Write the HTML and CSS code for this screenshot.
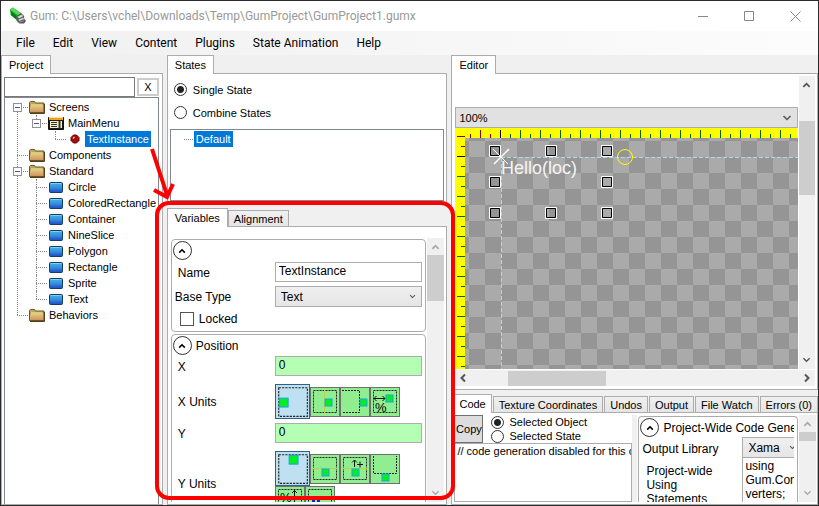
FILE: index.html
```html
<!DOCTYPE html>
<html lang="en">
<head>
<meta charset="utf-8">
<title>Gum</title>
<link rel="stylesheet" href="styles.css">
</head>
<body>
<svg class="defs" aria-hidden="true">
  <defs>
    <linearGradient id="blue" x1="0" y1="0" x2="0" y2="1"><stop offset="0" stop-color="#4fb0ea"/><stop offset=".5" stop-color="#2f93dc"/><stop offset="1" stop-color="#2346c4"/></linearGradient>
    <linearGradient id="fold" x1="0" y1="0" x2="0" y2="1"><stop offset="0" stop-color="#e6cf82"/><stop offset="1" stop-color="#cf9560"/></linearGradient>
    <symbol id="folder" viewBox="0 0 16 16"><path d="M.5 13.500V3.500l1-1h4l1 1.500h8.500v9.500z" fill="#c9a45c" stroke="#6b5424"/><path d="M2 5h11v4H2z" fill="#d3d27c"/><path d="M1 13V8h6l1-2h6v7z" fill="url(#fold)"/><path d="M1 14.500h14.500V5" fill="none" stroke="#54401c"/></symbol>
    <symbol id="screen" viewBox="0 0 16 16"><path d="M.5 2.500h15v12H.5z" fill="#1c1c1c" stroke="#111"/><path d="M1 2h14v3H1z" fill="#f2a21c"/><path d="M1 2.500h14" stroke="#ffe08a"/><path d="M2 6h12v7H2z" fill="#f4efc8"/><path d="M3 7.500h6M3 9.500h6M3 11.500h6" stroke="#333"/><path d="M11.500 6v7" stroke="#333" stroke-width="2"/></symbol>
    <symbol id="gem" viewBox="0 0 16 16"><path d="M6.500 4h3L12 6.500v3L9.500 12h-3L4 9.500v-3z" fill="#b00808" stroke="#5c0000"/><path d="M6 7.500L7.500 6" stroke="#ffb0b0" stroke-width="1.500"/></symbol>
    <symbol id="block" viewBox="0 0 16 16"><rect x="1.500" y="3.500" width="13" height="10" rx="1" fill="url(#blue)" stroke="#123a66"/><path d="M3 4.500h10" stroke="#7fd0f4"/></symbol>
    <symbol id="up" viewBox="0 0 10 6"><path d="M1.500 5L5 1.500 8.500 5" fill="none" stroke="currentColor" stroke-width="2"/></symbol>
    <symbol id="down" viewBox="0 0 10 6"><path d="M1.500 1L5 4.500 8.500 1" fill="none" stroke="currentColor" stroke-width="1.500"/></symbol>
  </defs>
</svg>
<div class="window">
  <header class="titlebar">
    <svg class="logo" viewBox="0 0 18 18"><path d="M1 2l3-2 9 6-1 6-4 1-6-5z" fill="#0fae22"/><path d="M1 2l3-2 9 6-4 2z" fill="#54d95c"/><path d="M2 4l6 5v4L2 8z" fill="#087b17"/><path d="M8 9l5-3 3 3v3l2 2-2 3h-5l-3-3z" fill="#555"/><path d="M9 10l4-2 2 1-4 2zM10 13l5-2 1 1-5 2zM11 15.500l5-1.500" fill="#ddd" stroke="#ddd" stroke-width=".5"/></svg>
    <h1 class="caption">Gum: C:\Users\vchel\Downloads\Temp\GumProject\GumProject1.gumx</h1>
    <div class="winbtns">
      <button aria-label="Minimize"><svg viewBox="0 0 11 11"><path d="M0 5.500h10"/></svg></button>
      <button aria-label="Maximize"><svg viewBox="0 0 11 11"><path d="M.5.500h9v9h-9z"/></svg></button>
      <button aria-label="Close"><svg viewBox="0 0 11 11"><path d="M.5.500l10 10M10.500.500l-10 10"/></svg></button>
    </div>
  </header>
  <nav class="menu">
    <button>File</button><button>Edit</button><button>View</button><button>Content</button><button>Plugins</button><button>State Animation</button><button>Help</button>
  </nav>
  <main class="work">
    <section class="pane project">
      <div class="tabs"><button class="tab on">Project</button></div>
      <div class="body">
        <div class="search"><input type="text" aria-label="Search"><button>X</button></div>
        <ul class="tree">
          <li><span class="row root"><i class="box"></i><svg><use href="#folder"/></svg><b>Screens</b></span>
            <ul class="l2">
              <li><span class="row"><i class="box"></i><svg><use href="#screen"/></svg><b>MainMenu</b></span>
                <ul class="l3"><li><span class="row"><svg><use href="#gem"/></svg><b class="sel">TextInstance</b></span></li></ul>
              </li>
            </ul>
          </li>
          <li><span class="row root"><svg><use href="#folder"/></svg><b>Components</b></span></li>
          <li><span class="row root"><i class="box"></i><svg><use href="#folder"/></svg><b>Standard</b></span>
            <ul class="l2">
              <li><span class="row"><svg><use href="#block"/></svg><b>Circle</b></span></li>
              <li><span class="row"><svg><use href="#block"/></svg><b>ColoredRectangle</b></span></li>
              <li><span class="row"><svg><use href="#block"/></svg><b>Container</b></span></li>
              <li><span class="row"><svg><use href="#block"/></svg><b>NineSlice</b></span></li>
              <li><span class="row"><svg><use href="#block"/></svg><b>Polygon</b></span></li>
              <li><span class="row"><svg><use href="#block"/></svg><b>Rectangle</b></span></li>
              <li><span class="row"><svg><use href="#block"/></svg><b>Sprite</b></span></li>
              <li><span class="row"><svg><use href="#block"/></svg><b>Text</b></span></li>
            </ul>
          </li>
          <li><span class="row root"><svg><use href="#folder"/></svg><b>Behaviors</b></span></li>
        </ul>
      </div>
    </section>

    <div class="middle">
      <section class="pane states">
        <div class="tabs"><button class="tab on">States</button></div>
        <div class="body">
          <label class="radio"><input type="radio" name="mode" checked>Single State</label>
          <label class="radio"><input type="radio" name="mode">Combine States</label>
          <div class="statelist"><span class="dots"></span><b class="sel">Default</b></div>
        </div>
      </section>
      <section class="pane vars">
        <div class="tabs"><button class="tab on">Variables</button><button class="tab">Alignment</button></div>
        <div class="body split">
          <div class="groups">
            <div class="group">
              <div class="ghead"><button class="expand" aria-label="Collapse"><svg><use href="#up"/></svg></button></div>
              <div class="field name"><label for="nm">Name</label><input id="nm" type="text" value="TextInstance"></div>
              <div class="field base"><label for="bt">Base Type</label><span class="combo"><select id="bt"><option>Text</option></select><svg><use href="#down"/></svg></span></div>
              <label class="check"><input type="checkbox">Locked</label>
            </div>
            <div class="group">
              <div class="ghead"><button class="expand" aria-label="Collapse"><svg><use href="#up"/></svg></button>Position</div>
              <div class="field green"><label for="px">X</label><input id="px" type="text" value="0"></div>
              <div class="field units"><span>X Units</span>
                <div class="unitset">
                  <button class="u on" aria-label="Left"><svg viewBox="0 0 30 30"><rect class="d" x="2.500" y="2.500" width="26" height="26"/><rect class="g" x="3" y="12" width="8" height="8"/></svg></button>
                  <button class="u" aria-label="Center"><svg viewBox="0 0 28 28"><rect class="d" x="2.500" y="2.500" width="23" height="22"/><path class="y" d="M13.500 2v23"/><rect class="g" x="14" y="11" width="7" height="7"/></svg></button>
                  <button class="u" aria-label="Right"><svg viewBox="0 0 28 28"><path class="d" d="M1 2.500h17.500v22H1"/><rect class="g" x="19" y="11" width="7" height="7"/></svg></button>
                  <button class="u" aria-label="Percent"><svg viewBox="0 0 28 28"><rect class="d" x="2.500" y="2.500" width="23" height="22"/><path class="k" d="M3 10.500h11M5.500 8L3 10.500 5.500 13M11.500 8l2.500 2.500L11.500 13"/><text x="4" y="24">%</text><rect class="g" x="15" y="7" width="7" height="7"/></svg></button>
                </div>
              </div>
              <div class="field green"><label for="py">Y</label><input id="py" type="text" value="0"></div>
              <div class="field units tall"><span>Y Units</span>
                <div class="unitset">
                  <button class="u on" aria-label="Top"><svg viewBox="0 0 30 30"><rect class="d" x="2.500" y="2.500" width="26" height="26"/><rect class="g" x="12" y="3" width="8" height="8"/></svg></button>
                  <button class="u" aria-label="Middle"><svg viewBox="0 0 28 28"><rect class="d" x="2.500" y="2.500" width="23" height="22"/><path class="y" d="M2 13.500h24"/><rect class="g" x="11" y="14" width="7" height="7"/></svg></button>
                  <button class="u" aria-label="Middle inverted"><svg viewBox="0 0 28 28"><rect class="d" x="2.500" y="2.500" width="23" height="22"/><path class="y" d="M2 13.500h24"/><path class="k" d="M13.500 12V5M11 7.500L13.500 5 16 7.500M16 9.500h6M19 6.500v6"/><rect class="g" x="11" y="14" width="7" height="7"/></svg></button>
                  <button class="u" aria-label="Bottom"><svg viewBox="0 0 28 28"><path class="d" d="M2.500 1v17.500h23V1"/><rect class="g" x="11" y="19" width="7" height="7"/></svg></button>
                  <button class="u" aria-label="Percent height"><svg viewBox="0 0 28 28"><rect class="d" x="2.500" y="2.500" width="23" height="22"/><text x="4" y="15">%</text><path class="k" d="M18.500 3v14M16 6l2.500-2.500L21 6"/></svg></button>
                  <button class="u" aria-label="Baseline"><svg viewBox="0 0 28 28"><rect class="d" x="2.500" y="2.500" width="23" height="22"/><path d="M6 12h3v8H6zM11 12h3v8h-3z" fill="#1420e0"/></svg></button>
                </div>
              </div>
            </div>
          </div>
          <div class="vbar dim"><svg><use href="#up"/></svg><i class="thumb"></i><svg class="end"><use href="#down"/></svg></div>
        </div>
      </section>
    </div>

    <div class="right">
      <section class="pane editor">
        <div class="tabs"><button class="tab on">Editor</button></div>
        <div class="body">
          <div class="split viewarea">
            <div class="view">
              <span class="combo zoom"><select aria-label="Zoom"><option>100%</option></select><svg><use href="#down"/></svg></span>
              <svg class="canvas" role="img" aria-label="Canvas">
                <defs>
                  <pattern id="chk" x="14" y="13" width="32" height="32" patternUnits="userSpaceOnUse"><path d="M0 0h32v32H0z" fill="#aaa"/><path d="M16 0h16v16H16zM0 16h16v16H0z" fill="#959595"/></pattern>
                  <pattern id="th" x="5" y="0" width="20" height="11" patternUnits="userSpaceOnUse"><path d="M0 2h1v8H0zM10 6h1v4h-1z" fill="#006400"/></pattern>
                  <pattern id="tv" x="0" y="8" width="11" height="20" patternUnits="userSpaceOnUse"><path d="M2 0h8v1H2zM6 10h4v1H6z" fill="#006400"/></pattern>
                </defs>
                <rect width="100%" height="100%" fill="#ff0"/>
                <rect x="11" width="100%" height="10" fill="url(#th)"/>
                <rect y="11" width="10" height="100%" fill="url(#tv)"/>
                <rect x="10" y="10" width="100%" height="100%" fill="url(#chk)"/>
                <path d="M15 6h1v4h-1zM25 2h1v8h-1zM35 6h1v4h-1zM2 8h8v1H2zM6 18h4v1H6z" fill="#8b0000"/>
                <path d="M45 2h1v8h-1zM2 28h8v1H2z" fill="#000"/>
                <path d="M46.500 30V400M46 29.500H900" stroke="#add8e6" stroke-dasharray="4 2" fill="none"/>
                <g fill="none" stroke="#fff"><path d="M34.500 17.500h11v11h-11zM90.500 17.500h11v11h-11zM146.500 17.500h11v11h-11zM34.500 48.500h11v11h-11zM146.500 48.500h11v11h-11zM34.500 79.500h11v11h-11zM90.500 79.500h11v11h-11zM146.500 79.500h11v11h-11z"/>
                <path stroke="#000" d="M35.500 18.500h9v9h-9zM91.500 18.500h9v9h-9zM147.500 18.500h9v9h-9zM35.500 49.500h9v9h-9zM147.500 49.500h9v9h-9zM35.500 80.500h9v9h-9zM91.500 80.500h9v9h-9zM147.500 80.500h9v9h-9z"/>
                <path d="M38 21l15 15"/><path d="M39 36l15-15" stroke-width="1.500"/></g>
                <circle cx="170" cy="29" r="7.500" fill="none" stroke="#ff0"/>
                <text class="hello" x="46" y="46">Hello(loc)</text>
              </svg>
            </div>
            <div class="vbar ed"><svg><use href="#up"/></svg><i class="thumb"></i><svg class="end"><use href="#down"/></svg></div>
          </div>
          <div class="hbar"><svg class="lt"><use href="#up"/></svg><i class="thumb"></i><svg class="rt"><use href="#up"/></svg></div>
        </div>
      </section>
      <section class="pane code">
        <div class="tabs"><button class="tab on">Code</button><button class="tab">Texture Coordinates</button><button class="tab">Undos</button><button class="tab">Output</button><button class="tab">File Watch</button><button class="tab">Errors (0)</button></div>
        <div class="body split">
          <div class="codeleft">
            <div class="copyrow"><button class="copy">Copy</button>
              <div><label class="radio sm"><input type="radio" name="gen" checked>Selected Object</label><label class="radio sm"><input type="radio" name="gen">Selected State</label></div>
            </div>
            <textarea aria-label="Generated code" wrap="off">// code generation disabled for this object</textarea>
          </div>
          <div class="gutter"></div>
          <div class="group settings">
            <div class="ghead"><button class="expand" aria-label="Collapse"><svg><use href="#up"/></svg></button>Project-Wide Code Generation</div>
            <div class="srow"><label for="ol">Output Library</label><span class="combo"><select id="ol"><option>Xama</option></select><svg><use href="#down"/></svg></span></div>
            <div class="srow"><label class="in" for="us">Project-wide Using Statements</label><textarea id="us" wrap="off">using
Gum.Con
verters;</textarea></div>
          </div>
          <div class="vbar dim cs"><svg><use href="#up"/></svg><i class="thumb"></i><svg class="end"><use href="#down"/></svg></div>
        </div>
      </section>
    </div>
  </main>
  <svg class="mark" viewBox="0 0 819 506" aria-hidden="true"><g fill="none" stroke="#f00" stroke-width="4"><rect x="157" y="203" width="296" height="295" rx="12"/><path d="M152 149l15 46M154 190l13 7 6-13"/></g></svg>
</div>
</body>
</html>
```
FILE: styles.css
```css
* { box-sizing: border-box; }
html, body { height: 100%; }
body { margin: 0; font: 11px/16px "Liberation Sans", Arial, sans-serif; color: #000; }
button, input, select, textarea { font: inherit; color: inherit; margin: 0; padding: 0; border: 0; border-radius: 0; background: none; }
ul { list-style: none; margin: 0; padding: 0; }
b { font-weight: normal; }
.defs { position: absolute; width: 0; height: 0; }
.window { position: relative; height: 100vh; overflow: hidden; display: flex; flex-direction: column; border: 1px solid #2b2b2b; background: #f0f0f0; }
.titlebar { display: flex; align-items: center; height: 30px; padding-left: 8px; background: #fff; flex: none; }
.logo { width: 17px; height: 18px; }
.caption { flex: 1; margin: 0 0 0 4px; font: 12px/16px Roboto, sans-serif; color: #999; white-space: nowrap; }
.winbtns { display: flex; }
.winbtns button { width: 46px; height: 30px; display: grid; place-items: center; }
.winbtns svg { width: 11px; height: 11px; fill: none; stroke: #888; }
.menu { display: flex; flex: none; height: 24px; padding-left: 6px; background: linear-gradient(90deg, #f0f0f0, #fcfcfc); font: 12px/16px Roboto, sans-serif; }
.menu button { padding: 0 9px; white-space: nowrap; }
.work { flex: 1; min-height: 0; display: grid; grid-template-columns: 162fr 281fr 367fr; gap: 4px; }
.middle, .right { display: flex; flex-direction: column; min-width: 0; min-height: 0; }
.pane { display: flex; flex-direction: column; min-width: 0; min-height: 0; }
.tabs { display: flex; align-items: flex-end; flex: none; height: 19px; margin-bottom: -1px; }
.tab { height: 16px; margin-bottom: 1px; padding: 0 5px; border: 1px solid #acacac; border-bottom: 0; background: linear-gradient(#f0f0f0, #e5e5e5); white-space: nowrap; line-height: 14px; }
.tab.on { position: relative; height: 19px; margin-bottom: 0; padding: 0 7px; background: #fff; }
.body { flex: 1; min-height: 0; min-width: 0; border: 1px solid #acacac; background: #fff; }
.split { display: flex; }
.sel { background: #0078d7; color: #fff; }

.project .body { display: flex; flex-direction: column; padding: 3px 3px 0 2px; }
.search { display: flex; gap: 2px; flex: none; }
.search input { flex: 1; min-width: 0; height: 20px; border: 1px solid #7a7a7a; }
.search button { width: 22px; height: 18px; margin-top: 1px; border: 2px solid #ccc; line-height: 14px; }
.tree { flex: 1; padding: 1px 0 0 12px; border: 1px solid #828790; border-bottom: 0; overflow: hidden; }
.tree li { position: relative; }
.row { display: flex; align-items: center; height: 16px; gap: 1px; position: relative; }
.row svg { width: 16px; height: 16px; flex: none; }
.row b { margin-left: 1px; padding: 0 2px; line-height: 16px; }
.row::before { content: ""; flex: none; width: 11px; border-top: 1px dotted #888; }
.tree > li:not(:last-child)::before, .l2 > li:not(:last-child)::before { content: ""; position: absolute; left: 0; top: 8px; bottom: -8px; border-left: 1px dotted #888; }
.l2, .l3 { padding-left: 19px; }
.l2 > li::after, .l3 > li::after { content: ""; position: absolute; left: 0; top: 0; height: 8px; border-left: 1px dotted #888; }
.box { position: absolute; z-index: 1; left: -4px; top: 4px; width: 9px; height: 9px; border: 1px solid #919191; background: linear-gradient(#3b5aa8, #3b5aa8) center / 5px 1px no-repeat #fff; }

.states { flex: none; height: 150px; }
.states .body { display: flex; flex-direction: column; padding: 4px 2px 3px 2px; }
.radio { display: flex; align-items: center; gap: 6px; height: 23px; padding-left: 4px; white-space: nowrap; }
input[type=radio] { appearance: none; width: 13px; height: 13px; flex: none; border: 1px solid #333; border-radius: 50%; background: #fff; }
input[type=radio]:checked { background: radial-gradient(circle, #222 3px, #fff 4px); }
.statelist { flex: 1; display: flex; align-items: flex-start; margin-top: 5px; padding: 1px 0 0 13px; border: 1px solid #828790; }
.dots { width: 9px; margin: 8px 1px 0 0; border-top: 1px dotted #888; }
.statelist .sel { padding: 0 2px; }

.vars { flex: 1; margin-top: 3px; }
.vars .body { padding: 11px 2px 2px 3px; }
.groups { flex: 1; min-width: 0; overflow: hidden; font-size: 12px; }
.group { border: 1px solid #acacac; border-radius: 4px; padding: 1px 3px 2px 1px; margin-bottom: 2px; }
.groups .group { margin-top: 1px; }
.groups .group + .group { margin-top: 0; }
.ghead { display: flex; align-items: center; gap: 4px; height: 19px; white-space: nowrap; overflow: hidden; }
.groups .group + .group .ghead { margin-bottom: 1px; }
.expand { display: grid; place-items: center; flex: none; width: 19px; height: 19px; border: 1px solid #333; border-radius: 50%; }
.expand svg { width: 8px; height: 6px; }
.field { display: grid; grid-template-columns: 102px 1fr; align-items: center; min-height: 19px; }
.field > label, .field > span:first-child { padding-left: 5px; }
.field > input { width: 100%; height: 20px; padding: 0 3px 2px; border: 1px solid #abadb3; }
.green > input { background: #b4ffb4; }
.name { margin-top: 2px; }
.name > label, .green > label { padding-top: 2px; }
.base { margin: 4px 0 2px; }
.base > label { padding-left: 2px; }
.combo { position: relative; display: block; }
.combo select { appearance: none; width: 100%; height: 21px; padding: 0 5px; border: 1px solid #acacac; background: linear-gradient(#f0f0f0, #e5e5e5); }
.combo svg { position: absolute; right: 6px; top: 8px; width: 7px; height: 5px; color: #555; pointer-events: none; }
.check { display: flex; align-items: center; gap: 5px; height: 20px; padding-left: 7px; }
.check input { appearance: none; width: 14px; height: 14px; border: 1px solid #555; background: #fff; }
.units { margin: 8px 0 4px; }
.unitset { display: flex; flex-wrap: wrap; align-items: center; }
.u { width: 30px; height: 30px; border: 1px solid #707070; background: #90ee90; }
.u.on { width: 35px; height: 35px; border-color: #2c628b; background: #bee0f0; }
.u svg { display: block; width: 100%; height: 100%; font-size: 13px; }
.u .d { fill: none; stroke: #222; stroke-dasharray: 2 1; }
.u .g { fill: #00f020; stroke: #1ca0e8; }
.u .y { stroke: #c8d040; }
.u .k { stroke: #111; fill: none; }
.vbar { display: flex; flex-direction: column; align-items: center; flex: none; width: 17px; margin-left: 1px; padding: 6px 0; background: #f0f0f0; color: #555; }
.vbar svg { width: 9px; height: 6px; flex: none; }
.vbar.dim { color: #aaa; }
.vbar .thumb { width: 100%; height: 46px; margin-top: 5px; background: #cdcdcd; }
.vbar .end { margin-top: auto; }

.editor { flex: none; height: 335px; }
.editor .body { display: flex; flex-direction: column; padding: 2px 2px 3px 3px; }
.viewarea { flex: 1; min-height: 0; }
.view { flex: 1; min-width: 0; display: flex; flex-direction: column; padding-top: 31px; }
.zoom select { display: block; padding: 0 3px; background: #e1e1e1; }
.zoom svg { width: 10px; height: 6px; }
.canvas { flex: 1; width: 100%; min-height: 0; }
.hello { font: 18px "Liberation Sans", sans-serif; fill: #f4f4f4; }
.vbar.ed { width: 16px; }
.ed .thumb { height: 74px; margin-top: 33px; }
.hbar { display: flex; align-items: center; flex: none; height: 16px; margin-top: 1px; padding: 0 3px; background: #f0f0f0; color: #555; }
.hbar svg { width: 10px; height: 6px; }
.lt { transform: rotate(-90deg); }
.rt { transform: rotate(90deg); margin-left: auto; }
.hbar .thumb { width: 98px; height: 15px; margin-left: 40px; background: #cdcdcd; }

.code { flex: 1; margin-top: 4px; }
.code .tabs { gap: 1px; padding-left: 2px; }
.code .tab.on { padding: 0 5px; }
.code .body { padding: 2px 1px 2px 2px; }
.codeleft { flex: 0 0 178px; min-width: 0; display: flex; flex-direction: column; }
.copyrow { display: flex; gap: 4px; height: 28px; }
.copy { width: 29px; border: 1px solid #707070; background: #ddd; }
.radio.sm { gap: 5px; height: 14px; }
.codeleft textarea { flex: 1; width: 100%; min-height: 0; padding: 0 2px; border: 1px solid #abadb3; line-height: 14px; resize: none; overflow: hidden; background: #fff; }
.gutter { flex: none; width: 5px; background: #f0f0f0; }
.settings { flex: 1; min-width: 0; margin: 1px 0 0 1px; border-bottom: 0; border-radius: 4px 4px 0 0; overflow: hidden; font-size: 12px; }
.srow { display: grid; grid-template-columns: 102px 60px; align-items: start; overflow: hidden; line-height: 14px; }
.srow label { padding: 5px 0 0 2px; }
.srow .in { padding: 6px 20px 0 6px; }
.srow textarea { width: 100%; height: 50px; padding: 1px 2px; border: 1px solid #abadb3; border-top: 0; resize: none; overflow: hidden; line-height: 14px; }
.cs .thumb { height: 9px; }
.mark { position: absolute; left: -1px; top: -1px; width: 819px; height: 506px; pointer-events: none; }
```
